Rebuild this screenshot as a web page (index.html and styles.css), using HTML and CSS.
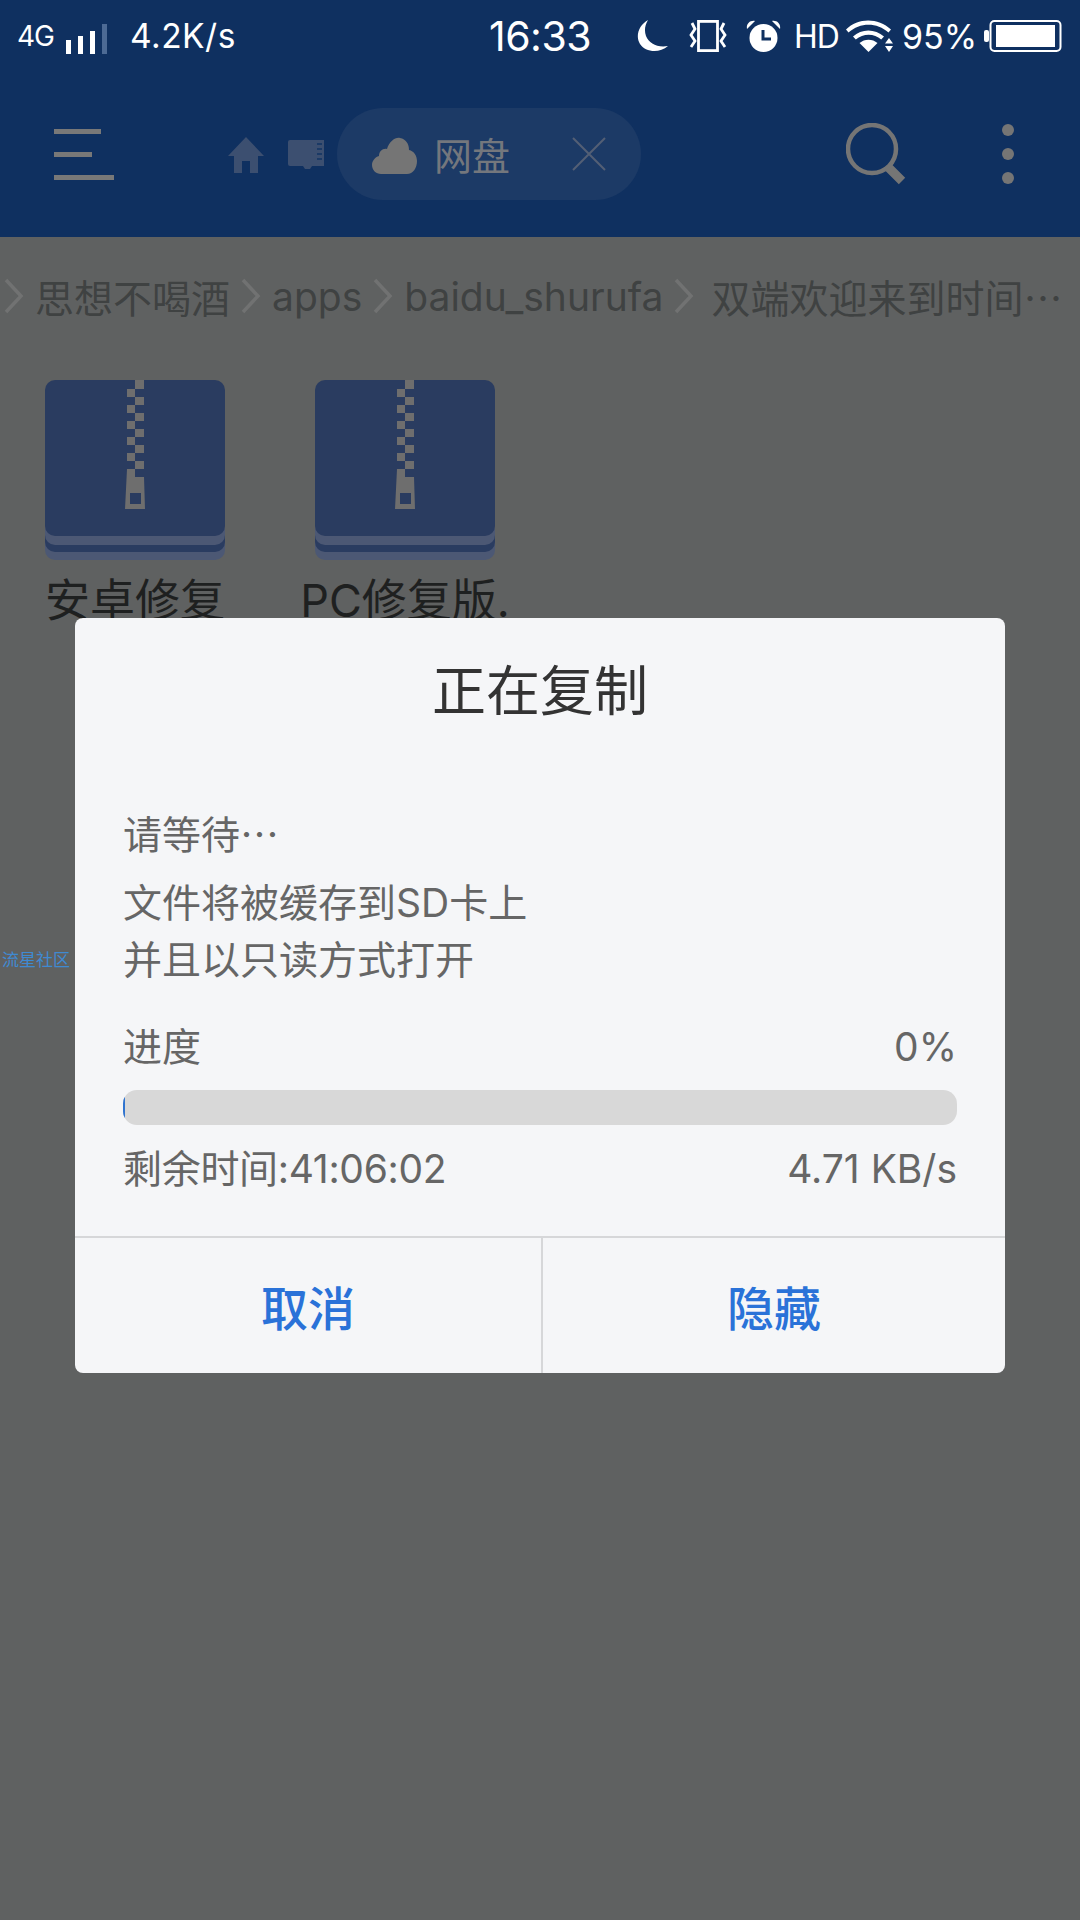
FILE: index.html
```html
<!DOCTYPE html>
<html lang="zh-CN">
<head>
  <meta charset="UTF-8">
  <meta name="viewport" content="width=device-width, initial-scale=1.0">
  <title>正在复制</title>
  <link rel="stylesheet" href="styles.css">
</head>
<body>
  <header class="top">
    <div class="status">
      <span class="net">4G</span>
      <svg class="signal" width="41" height="30" viewBox="0 0 41 30">
        <rect x="0" y="16" width="5" height="14" fill="#fff"/>
        <rect x="12" y="12" width="5" height="18" fill="#fff"/>
        <rect x="24" y="7" width="5" height="23" fill="#fff"/>
        <rect x="36" y="0" width="5" height="30" fill="#4d6a94"/>
      </svg>
      <span class="speed">4.2K/s</span>
      <span class="clock">16:33</span>
      <svg class="moon" width="31" height="32" viewBox="0 0 31 32">
        <path d="M11 0C2 5-2 16 3 24c5 8 19 10 28 2-11 2-19-3-22-10C7 10 8 5 11 0z" fill="#fff"/>
      </svg>
      <svg class="vibrate" width="38" height="32" viewBox="0 0 38 32" fill="none" stroke="#fff" stroke-width="2.8">
        <rect x="9.500" y="1.400" width="19" height="29.200"/>
        <path d="M3 3 6 9 2 15 6 21 2 27"/>
        <path d="M35 3 32 9 36 15 32 21 36 27"/>
      </svg>
      <svg class="alarm" width="35" height="32" viewBox="0 0 35 32">
        <circle cx="17.500" cy="18" r="14" fill="#fff"/>
        <path d="M1 9C0 4 4 0 9 1z M34 9c1-5-3-9-8-8z" fill="#fff"/>
        <path d="M17 10v9h8" fill="none" stroke="#0f3060" stroke-width="3"/>
      </svg>
      <span class="hd">HD</span>
      <svg class="wifi" width="47" height="32" viewBox="0 0 47 32">
        <path d="M0 9.500C12-2.500 32-2.500 45 9.500l-2.500 3C31 2 14 2 2.500 12.500z" fill="#fff"/>
        <path d="M7 16.500c8.500-8 22-8 31 0l-2.800 3c-7-6.500-18-6.500-25.400 0z" fill="#fff"/>
        <path d="M13.500 23c5-4.500 13-4.500 18 0L22.500 32z" fill="#fff"/>
        <path d="M43 18l4 5.500h-8zM43 32l4-6h-8z" fill="#fff"/>
      </svg>
      <span class="pct">95%</span>
      <svg class="battery" width="78" height="32" viewBox="0 0 78 32">
        <rect x="0" y="10" width="5" height="12" rx="2" fill="#fff"/>
        <rect x="6.500" y="1" width="70" height="30" rx="4" fill="none" stroke="#fff" stroke-width="2"/>
        <rect x="12" y="5" width="59" height="22" fill="#fff"/>
      </svg>
    </div>

    <div class="toolbar">
      <div class="menu">
        <i class="menu-a"></i>
        <i class="menu-b"></i>
        <i class="menu-c"></i>
      </div>
      <svg class="home" width="36" height="36" viewBox="0 0 36 36">
        <path d="M18 0 36 19h-6v17h-8V24h-8v12H6V19H0z" fill="#3c4f70"/>
      </svg>
      <svg class="sdcard" width="36" height="30" viewBox="0 0 36 30">
        <path d="M2 0h34v26h-12l-2 3h-5l-2-3H2a2 2 0 0 1-2-2V2a2 2 0 0 1 2-2z" fill="#3c4f70"/>
        <path d="M29 4h5M29 9h5M29 14h5M29 19h5" stroke="#1b3a66" stroke-width="2"/>
      </svg>
      <div class="tab">
        <svg class="cloud" width="45" height="37" viewBox="0 0 45 37">
          <path d="M9 37C4 37 0 33 0 28c0-4 3-8 7-9 0-5 4-8 8-7 2-7 8-12 13-11 6 1 9 6 9 12 5 1 8 6 8 11 0 7-4 13-10 13z" fill="#757575"/>
        </svg>
        <span class="tab-name">网盘</span>
        <svg class="tab-close" width="34" height="34" viewBox="0 0 34 34">
          <path d="M1 1 33 33M33 1 1 33" stroke="#535f75" stroke-width="2"/>
        </svg>
      </div>
      <svg class="search" width="62" height="62" viewBox="0 0 62 62" fill="none">
        <circle cx="26" cy="26" r="24" stroke="#757575" stroke-width="4.500"/>
        <path d="M41 43 56 58" stroke="#757575" stroke-width="9"/>
      </svg>
      <div class="more">
        <i></i>
        <i></i>
        <i></i>
      </div>
    </div>
  </header>

  <nav class="crumbs">
    <svg class="chev" width="20" height="36" viewBox="0 0 20 36"><path d="M2 2 17 18 2 34" fill="none" stroke="#717272" stroke-width="3.500"/></svg>
    <span class="crumb">思想不喝酒</span>
    <svg class="chev" width="20" height="36" viewBox="0 0 20 36"><path d="M2 2 17 18 2 34" fill="none" stroke="#717272" stroke-width="3.500"/></svg>
    <span class="crumb">apps</span>
    <svg class="chev" width="20" height="36" viewBox="0 0 20 36"><path d="M2 2 17 18 2 34" fill="none" stroke="#717272" stroke-width="3.500"/></svg>
    <span class="crumb">baidu_shurufa</span>
    <svg class="chev" width="20" height="36" viewBox="0 0 20 36"><path d="M2 2 17 18 2 34" fill="none" stroke="#717272" stroke-width="3.500"/></svg>
    <span class="crumb crumb-last">双端欢迎来到时间<span class="dots">…</span></span>
  </nav>

  <section class="files">
    <div class="file">
      <svg class="zip" width="180" height="180" viewBox="0 0 180 180">
        <rect x="0" y="150" width="180" height="30" rx="10" fill="#4c5874"/>
        <rect x="0" y="145" width="180" height="27" rx="10" fill="#2a3c60"/>
        <rect x="0" y="140" width="180" height="25" rx="10" fill="#4c5874"/>
        <rect x="0" y="0" width="180" height="156" rx="10" fill="#2a3c60"/>
        <path d="M90 0h9v9h-9zM82 9h8v8h-8zM90 17h9v8h-9zM82 25h8v8h-8zM90 33h9v8h-9zM82 41h8v8h-8zM90 49h9v8h-9zM82 57h8v8h-8zM90 65h9v8h-9zM82 73h8v8h-8zM90 81h9v8h-9z" fill="#6e6e6e"/>
        <path d="M82 89h8v8h9l1 32H80z M85 113v11h11v-11z" fill="#6e6e6e" fill-rule="evenodd"/>
      </svg>
      <span class="file-name">安卓修复</span>
    </div>
    <div class="file">
      <svg class="zip" width="180" height="180" viewBox="0 0 180 180">
        <rect x="0" y="150" width="180" height="30" rx="10" fill="#4c5874"/>
        <rect x="0" y="145" width="180" height="27" rx="10" fill="#2a3c60"/>
        <rect x="0" y="140" width="180" height="25" rx="10" fill="#4c5874"/>
        <rect x="0" y="0" width="180" height="156" rx="10" fill="#2a3c60"/>
        <path d="M90 0h9v9h-9zM82 9h8v8h-8zM90 17h9v8h-9zM82 25h8v8h-8zM90 33h9v8h-9zM82 41h8v8h-8zM90 49h9v8h-9zM82 57h8v8h-8zM90 65h9v8h-9zM82 73h8v8h-8zM90 81h9v8h-9z" fill="#6e6e6e"/>
        <path d="M82 89h8v8h9l1 32H80z M85 113v11h11v-11z" fill="#6e6e6e" fill-rule="evenodd"/>
      </svg>
      <span class="file-name">PC修复版.</span>
    </div>
  </section>

  <span class="watermark">流星社区</span>

  <div class="dialog">
    <h1 class="dialog-title">正在复制</h1>
    <div class="dialog-body">
      <p class="wait">请等待<span class="dots">…</span></p>
      <p class="note">文件将被缓存到SD卡上<br>并且以只读方式打开</p>
      <div class="row row-progress">
        <span>进度</span>
        <span>0%</span>
      </div>
      <div class="bar"><div class="bar-fill"></div></div>
      <div class="row row-time">
        <span class="remain">剩余时间:41:06:02</span>
        <span>4.71 KB/s</span>
      </div>
    </div>
    <div class="dialog-btns">
      <button class="btn btn-cancel">取消</button>
      <button class="btn">隐藏</button>
    </div>
  </div>
</body>
</html>
```

FILE: styles.css
```css
* {
  box-sizing: border-box;
}
body {
  margin: 0;
  width: 1080px;
  height: 1920px;
  overflow: hidden;
  position: relative;
  background-color: #5f6161;
  font-family: Inter, "Noto Sans CJK SC", sans-serif;
}
.dots {
  font-family: "Noto Sans CJK SC", sans-serif;
}

/* status bar + toolbar */
.top {
  height: 237px;
  background-color: #0f3060;
}
.status {
  display: flex;
  align-items: center;
  height: 72px;
  padding-left: 17px;
  color: #fff;
}
.net {
  width: 49px;
  font-size: 28px;
  letter-spacing: -1px;
}
.signal {
  margin-bottom: -6px;
}
.speed {
  width: 359px;
  margin-left: 23px;
  font-size: 33.500px;
  letter-spacing: 0.5px;
}
.clock {
  width: 148px;
  font-size: 41px;
  letter-spacing: -0.5px;
}
.vibrate {
  margin-left: 21px;
}
.alarm {
  margin-left: 19px;
}
.hd {
  width: 52px;
  margin-left: 13px;
  font-size: 32px;
  letter-spacing: -1px;
}
.wifi {
  margin-right: 9px;
}
.pct {
  width: 82px;
  font-size: 34px;
}
.toolbar {
  display: flex;
  align-items: center;
  height: 165px;
  padding: 0 0 2px 54px;
}
.menu {
  display: flex;
  flex-direction: column;
  gap: 18px;
  width: 174px;
  margin-top: 2px;
}
.menu i {
  display: block;
  height: 5px;
  background-color: #787878;
}
.menu-a { width: 47px; }
.menu-b { width: 38px; }
.menu-c { width: 60px; }
.home {
  margin-top: 2px;
}
.sdcard {
  margin: 2px 13px 0 24px;
}
.tab {
  display: flex;
  align-items: center;
  width: 304px;
  height: 92px;
  padding-left: 35px;
  border-radius: 46px;
  background-color: #1c3a66;
}
.cloud {
  margin-top: 4px;
}
.tab-name {
  margin-left: 17px;
  font-size: 38px;
  color: #74777d;
}
.tab-close {
  margin-left: 62px;
}
.search {
  margin-left: 205px;
}
.more {
  display: flex;
  flex-direction: column;
  gap: 12px;
  margin-left: 94px;
}
.more i {
  display: block;
  width: 12px;
  height: 12px;
  border-radius: 50%;
  background-color: #757575;
}

/* breadcrumb */
.crumbs {
  display: flex;
  align-items: center;
  height: 118px;
  padding-left: 4px;
  white-space: nowrap;
}
.crumb {
  margin: 0 11px;
  font-size: 39px;
  color: #3f4242;
}
.crumb-last {
  margin-left: 17px;
}

/* file grid */
.files {
  display: grid;
  grid-template-columns: 270px 270px;
  padding-top: 25px;
}
.file {
  display: flex;
  flex-direction: column;
  align-items: center;
}
.zip {
  display: block;
}
.file-name {
  margin-top: 8px;
  font-size: 45px;
  line-height: 66px;
  color: #1e2020;
}

.watermark {
  position: absolute;
  left: 2px;
  top: 950px;
  font-size: 17px;
  line-height: 20px;
  color: #3f8ad2;
}

/* dialog */
.dialog {
  position: absolute;
  left: 75px;
  top: 618px;
  display: flex;
  flex-direction: column;
  width: 930px;
  height: 755px;
  border-radius: 8px;
  overflow: hidden;
  background-color: #f5f6f8;
}
.dialog-title {
  margin: 0;
  padding-top: 40px;
  font-size: 54px;
  font-weight: 400;
  line-height: 68px;
  text-align: center;
  color: #333;
}
.dialog-body {
  flex: 1;
  padding: 0 48px;
  font-size: 39px;
  color: #666;
}
.wait {
  margin: 78px 0 0;
  line-height: 56px;
}
.note {
  margin: 11px 0 0;
  line-height: 57px;
}
.row {
  display: flex;
  justify-content: space-between;
  line-height: 56px;
}
.row-progress {
  margin-top: 31px;
}
.bar {
  height: 35px;
  margin-top: 15px;
  border-radius: 14px;
  overflow: hidden;
  background-color: #d8d8d8;
}
.bar-fill {
  width: 2px;
  height: 100%;
  background-color: #2f74d0;
}
.row-time {
  margin-top: 16px;
}
.remain {
  letter-spacing: -0.3px;
}
.dialog-btns {
  display: flex;
  height: 137px;
  border-top: 2px solid #d6d7d9;
}
.btn {
  flex: 1;
  padding: 0;
  border: none;
  background: none;
  font-family: inherit;
  font-size: 47px;
  font-weight: 500;
  color: #2a72d8;
}
.btn-cancel {
  flex: none;
  width: 468px;
  border-right: 2px solid #d6d7d9;
}
```
